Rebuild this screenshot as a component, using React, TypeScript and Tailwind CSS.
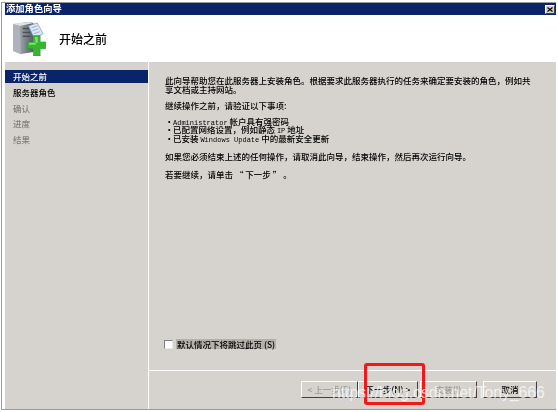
const F = '"Noto Sans CJK SC","Liberation Sans",sans-serif';

function WizardIcon() {
  return (
    <svg width="33" height="35" viewBox="0 0 34 36" className="shrink-0">
      <defs>
        <linearGradient id="srv" x1="0" x2="1" y1="0" y2="0">
          <stop offset="0" stopColor="#c8ccd0" />
          <stop offset="0.45" stopColor="#8f969d" />
          <stop offset="1" stopColor="#555c63" />
        </linearGradient>
      </defs>
      <polygon points="0,3 16,1 21,2 21,32 8,34 0,31" fill="url(#srv)" />
      <polygon points="0,3 16,1 21,2 7,5" fill="#dfe2e5" />
      <polygon points="0,3 7,5 8,34 0,31" fill="#adb3b9" />
      <rect x="10" y="7" width="8" height="1.5" fill="#4a5057" />
      <rect x="10" y="11" width="8" height="1.5" fill="#4a5057" />
      <rect x="10" y="15" width="8" height="1.5" fill="#4a5057" />
      <polygon points="16,5 25,2 31,13 22,18" fill="#dbe7f5" stroke="#7d9cc4" strokeWidth="0.8" />
      <path d="M19 7l6-2M20 10l6-2M21.500 13l6-2" stroke="#8aa6cc" strokeWidth="0.8" />
      <path d="M21 15h7v6.500h6.500v7H28V36h-7v-7.500h-6.500v-7H21z" fill="#35b532" stroke="#2c8f2a" strokeWidth="0.5" />
      <path d="M22.500 16.500h3v6h-9v2h7" fill="#7fe06a" />
    </svg>
  );
}

function Btn({ label, disabled, w, ml }: { label: string; disabled?: boolean; w: string; ml?: string }) {
  return (
    <div
      className={`${w} ${ml ?? ""} h-[17px] flex items-center justify-center border border-t-white border-l-white border-r-[#404040] border-b-[#404040] text-[8.5px] ${disabled ? "text-[#9a9a96]" : "text-black"}`}
    >
      {label}
    </div>
  );
}

function Item({ children }: { children: React.ReactNode }) {
  return (
    <li className="h-[8.500px] leading-[8.500px] whitespace-nowrap">
      <span className="inline-block w-[8px]">•</span>
      {children}
    </li>
  );
}

const mono = "font-['Liberation_Mono'] text-[7px] leading-none";

export default function App() {
  return (
    <div className="relative w-[558px] h-[412px] bg-white overflow-hidden" style={{ fontFamily: F }}>
      <div className="w-full h-full flex flex-col pt-[2px] pb-[2px] pr-[2px] pl-px blur-[0.35px]">
        <div className="flex-1 flex flex-col border-l-[1px] border-t-[1px] border-[#9a9a9a] pl-[3px] border-b-[1px] min-h-0">
          <div className="h-[12px] bg-[#0a246a] flex items-center justify-between pl-[1px] pr-px">
            <span className="text-white text-[9.300px] font-bold leading-none">添加角色向导</span>
            <div className="w-[10px] h-[9px] bg-[#d4d0c8] border border-t-white border-l-white border-r-[#404040] border-b-[#404040] flex items-center justify-center">
              <svg width="6" height="5" viewBox="0 0 6 5"><path d="M0.500 0.500l5 4M5.500 0.500l-5 4" stroke="#000" strokeWidth="1.200" /></svg>
            </div>
          </div>
          <div className="h-[47px] bg-white flex items-center pl-[8px] gap-[13px]">
            <WizardIcon />
            <span className="text-[12px] font-medium text-black leading-none">开始之前</span>
          </div>
          <div className="flex-1 flex bg-[#d6d3ce] min-h-0">
            <div className="w-[143px] shrink-0 pt-[8px] text-[8.500px] leading-none font-medium">
              <div className="h-[13px] bg-[#0a246a] text-white flex items-center pl-[8px]">开始之前</div>
              <div className="h-[16px] mt-[1px] flex items-center pl-[8px] text-black">服务器角色</div>
              <div className="h-[16px] flex items-center pl-[8px] text-[#80807c]">确认</div>
              <div className="h-[15px] flex items-center pl-[8px] text-[#80807c]">进度</div>
              <div className="h-[16px] flex items-center pl-[8px] text-[#80807c]">结果</div>
            </div>
            <div className="flex-1 flex flex-col border-l border-white min-w-0">
              <div className="flex-1 flex flex-col pl-[16px] pr-[12px] pt-[14px] text-[8.500px] text-black font-medium">
                <p className="leading-[8.500px] w-[372px]">此向导帮助您在此服务器上安装角色。根据要求此服务器执行的任务来确定要安装的角色，例如共享文档或主持网站。</p>
                <p className="leading-none mt-[8px]">继续操作之前，请验证以下事项:</p>
                <ul className="mt-[7px]">
                  <Item><span className={mono}>Administrator</span> 帐户具有强密码</Item>
                  <Item>已配置网络设置，例如静态 <span className={mono}>IP</span> 地址</Item>
                  <Item>已安装 <span className={mono}>Windows Update</span> 中的最新安全更新</Item>
                </ul>
                <p className="leading-none mt-[10px]">如果您必须结束上述的任何操作，请取消此向导，结束操作，然后再次运行向导。</p>
                <p className="leading-none mt-[9px]">若要继续，请单击 “ 下一步 ” 。</p>
                <div className="mt-auto mb-[21px] flex items-center gap-[3px] -ml-px">
                  <div className="w-[9px] h-[9px] bg-white border border-[#808080] border-r-[#e8e8e8] border-b-[#e8e8e8]" />
                  <span className="bg-[#b4b1ab] text-[8.500px] leading-[10px] text-black px-[1px]">默认情况下将跳过此页 (S)</span>
                </div>
              </div>
              <div className="h-[39px] border-t border-white flex items-start pt-[10px] pl-[152px] font-medium">
                <Btn label="< 上一步(P)" disabled w="w-[57px]" />
                <Btn label="下一步(N) >" w="w-[60px]" />
                <Btn label="安装(I)" disabled w="w-[57px]" ml="ml-[2px]" />
                <Btn label="取消" w="w-[54px]" ml="ml-[6px]" />
              </div>
            </div>
          </div>
        </div>
      </div>
      <div className="absolute left-[364px] top-[363px] w-[61px] h-[42px] border-[3px] border-[#f01818] rounded-[3px]" />
      <span className="absolute left-[332px] top-[385px] text-[15.700px] leading-none text-white/70 font-['Liberation_Sans']">https://blog.csdn.net/Tony_666</span>
    </div>
  );
}
